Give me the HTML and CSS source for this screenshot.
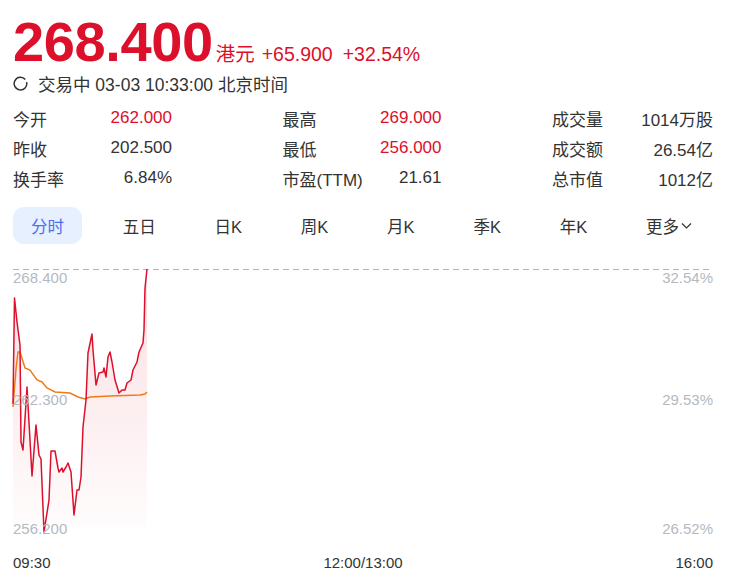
FILE: index.html
```html
<!DOCTYPE html>
<html lang="zh-CN">
<head>
    <meta charset="UTF-8">
    <meta name="viewport" content="width=device-width, initial-scale=1.0">
    <title>268.400 港元 - 分时</title>
    <link rel="stylesheet" href="styles.css">
</head>
<body>

    <div class="quote">
        <!-- Price header -->
        <div class="price-row">
            <span class="price">268.400</span>
            <span class="unit">港元</span>
            <span class="chg">+65.900</span>
            <span class="chg pct">+32.54%</span>
        </div>
        <div class="status">
            <svg class="status-icon" width="15" height="15" viewBox="0 0 15 15">
                <path d="M12.3 3.6 A6.3 6.3 0 1 0 13.6 6.2" fill="none" stroke="#333" stroke-width="1.5"/>
            </svg>
            <span>交易中 03-03 10:33:00 北京时间</span>
        </div>

        <!-- Stats -->
        <div class="stats">
            <div class="stat"><span>今开</span><span class="up">262.000</span></div>
            <div class="stat"><span>最高</span><span class="up">269.000</span></div>
            <div class="stat"><span>成交量</span><span>1014万股</span></div>
            <div class="stat"><span>昨收</span><span>202.500</span></div>
            <div class="stat"><span>最低</span><span class="up">256.000</span></div>
            <div class="stat"><span>成交额</span><span>26.54亿</span></div>
            <div class="stat"><span>换手率</span><span>6.84%</span></div>
            <div class="stat"><span>市盈(TTM)</span><span>21.61</span></div>
            <div class="stat"><span>总市值</span><span>1012亿</span></div>
        </div>

        <!-- Period tabs -->
        <div class="tabs">
            <div class="tab active">分时</div>
            <div class="tab">五日</div>
            <div class="tab">日K</div>
            <div class="tab">周K</div>
            <div class="tab">月K</div>
            <div class="tab">季K</div>
            <div class="tab">年K</div>
            <div class="tab more">更多<svg width="11" height="8" viewBox="0 0 11 8"><polyline points="1,1.5 5.5,6 10,1.5" fill="none" stroke="#333" stroke-width="1.2"/></svg></div>
        </div>

        <!-- Intraday chart -->
        <div class="chart">
            <svg class="chart-svg" width="700" height="268" viewBox="0 0 700 268">
                <defs>
                    <linearGradient id="area" x1="0" y1="0" x2="0" y2="1">
                        <stop offset="0" stop-color="#e0102a" stop-opacity="0.14"/>
                        <stop offset="1" stop-color="#e0102a" stop-opacity="0.01"/>
                    </linearGradient>
                </defs>
                <line x1="0" y1="0.5" x2="700" y2="0.5" stroke="#f59a9a" stroke-width="1.2" stroke-dasharray="6 4"/>
                <path id="area-path" fill="url(#area)" d=""/>
                <polyline id="avg-line" fill="none" stroke="#f07b16" stroke-width="1.5" points=""/>
                <polyline id="price-line" fill="none" stroke="#dc102b" stroke-width="1.5" stroke-linejoin="round" points=""/>
            </svg>
            <div class="axis-labels">
                <span class="lbl-top">268.400</span>
                <span class="lbl-mid">262.300</span>
                <span class="lbl-bot">256.200</span>
            </div>
            <div class="axis-labels right">
                <span class="lbl-top">32.54%</span>
                <span class="lbl-mid">29.53%</span>
                <span class="lbl-bot">26.52%</span>
            </div>
        </div>
        <div class="time-axis">
            <span>09:30</span>
            <span>12:00/13:00</span>
            <span>16:00</span>
        </div>
    </div>

    <script>
        // minute points (x, y) in chart pixels, 09:30 -> 10:33
        const pricePoints = [
            [0,135],[1.5,29],[4,53],[7,76],[8,173],[10,181],[14,118],[19,207],[23,156],[26,186],
            [28,190],[31,263],[36,231],[38,182],[42,182],[45,199],[46,203],[49,199],[50,203],[53,198],
            [55,194],[58,203],[61,246],[64,221],[66,221],[68,208],[70,158],[73,131],[75,84],[79,65],
            [80,81],[83,116],[86,104],[90,103],[91,99],[93,108],[95,88],[97,83],[99,93],[102,111],
            [106,124],[109,121],[112,121],[114,114],[118,111],[120,101],[124,93],[126,83],[130,74],
            [131,61],[132,19],[134,0]
        ];
        const avgPoints = [
            [0,138],[3,100],[5,83],[7,83],[12,99],[17,101],[24,111],[29,113],[34,119],[42,123],
            [57,124],[65,128],[72,130],[77,128],[97,127],[127,126],[132,125],[134,123]
        ];
        const bottom = 258;

        function toPoints(list) {
            return list.map(p => p[0] + ',' + p[1]).join(' ');
        }

        document.getElementById('price-line').setAttribute('points', toPoints(pricePoints));
        document.getElementById('avg-line').setAttribute('points', toPoints(avgPoints));

        const last = pricePoints[pricePoints.length - 1];
        const areaD = 'M' + pricePoints.map(p => p[0] + ' ' + p[1]).join(' L') +
            ' L' + last[0] + ' ' + bottom + ' L0 ' + bottom + ' Z';
        document.getElementById('area-path').setAttribute('d', areaD);
    </script>
</body>
</html>
```

FILE: styles.css
```css
body {
    margin: 0;
    font-family: "Liberation Sans", "Noto Sans CJK SC", sans-serif;
    color: #333;
    background: #fff;
}

.quote {
    padding: 14px 19px 0 13px;
}

/* Price header */
.price-row {
    display: flex;
    align-items: baseline;
    height: 55px;
    line-height: 55px;
    color: #dc102b;
}

.price {
    font-size: 56px;
    font-weight: bold;
    letter-spacing: -0.4px;
}

.unit {
    font-size: 19.5px;
    margin-left: 3px;
}

.chg {
    font-size: 19.5px;
    margin-left: 7px;
}

.chg.pct {
    margin-left: 10px;
}

.status {
    display: flex;
    align-items: center;
    margin-top: 2px;
    height: 24px;
    font-size: 17.5px;
}

.status-icon {
    margin-right: 10px;
}

/* Stats grid */
.stats {
    display: grid;
    grid-template-columns: 159px 159px 161px;
    grid-auto-rows: 30px;
    justify-content: space-between;
    margin-top: 8px;
    font-size: 17px;
}

.stat {
    display: flex;
    justify-content: space-between;
    align-items: center;
}

.up {
    color: #dc102b;
}

/* Tabs */
.tabs {
    display: flex;
    justify-content: space-between;
    margin-top: 14px;
    margin-right: 3px;
}

.tab {
    display: flex;
    align-items: center;
    height: 37px;
    padding: 0 18px;
    font-size: 16.5px;
    border-radius: 11px;
}

.tab.active {
    background-color: #e6f0ff;
    color: #4e6ef2;
}

.tab.more svg {
    margin-left: 2px;
}

/* Chart */
.chart {
    position: relative;
    height: 268px;
    margin-top: 25px;
}

.chart-svg {
    display: block;
    overflow: visible;
}

.axis-labels {
    position: absolute;
    top: 0;
    left: 0;
    height: 268px;
    font-size: 15px;
    line-height: 17px;
    color: #b4b9c2;
}

.axis-labels.right {
    left: auto;
    right: 0;
    text-align: right;
}

.axis-labels span {
    position: absolute;
    white-space: nowrap;
}

.axis-labels.right span {
    right: 0;
}

.lbl-top {
    top: 0;
}

.lbl-mid {
    top: 122px;
}

.lbl-bot {
    bottom: 0;
}

.time-axis {
    display: flex;
    justify-content: space-between;
    margin-top: 16px;
    font-size: 15px;
    line-height: 20px;
}
```
